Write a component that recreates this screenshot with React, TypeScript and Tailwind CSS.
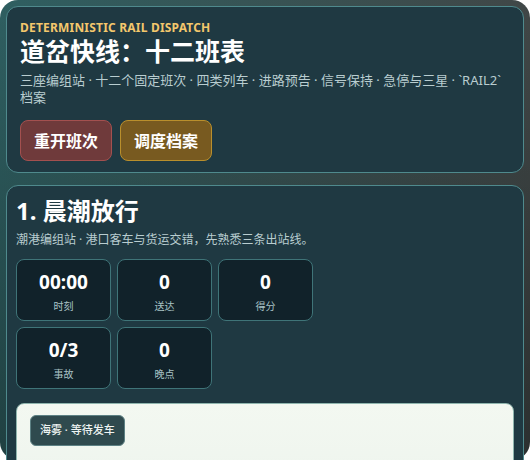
import React from "react";

const stats1 = [
  { v: "00:00", l: "时刻" },
  { v: "0", l: "送达" },
  { v: "0", l: "得分" },
];
const stats2 = [
  { v: "0/3", l: "事故" },
  { v: "0", l: "晚点" },
];

function Stat({ v, l }: { v: string; l: string }) {
  return (
    <div className="h-[62px] rounded-[8px] border border-[#3f7478] bg-[#11222a] pt-[3px] flex flex-col items-center justify-center">
      <div className="text-[19px] font-bold leading-[22px] text-white">{v}</div>
      <div className="mt-[7px] text-[10px] leading-[12px] text-[#a9c3c6]">{l}</div>
    </div>
  );
}

export default function App() {
  return (
    <div
      className="h-[460px] w-[530px] rounded-[18px] p-[6px] flex flex-col gap-[12px] bg-[linear-gradient(to_bottom,rgba(0,0,0,0)_0%,rgba(0,0,0,0.33)_100%),linear-gradient(to_right,#2f5f61,#404747)]"
      style={{ fontFamily: '"Noto Sans", "Noto Sans CJK SC", sans-serif' }}
    >
      <div className="shrink-0 rounded-[12px] border border-[#4f8a8d] bg-[#1f3942] px-[13px] pt-[14px] pb-[11px]">
        <div className="text-[12px] font-bold leading-[14px] tracking-[0.2px] text-[#f3c76c]">
          DETERMINISTIC RAIL DISPATCH
        </div>
        <div className="text-[25px] font-bold leading-[32px] text-white">道岔快线：十二班表</div>
        <div className="mt-[5px] text-[13px] leading-[17px] text-[#b9cdd0]">
          三座编组站 · 十二个固定班次 · 四类列车 · 进路预告 · 信号保持 · 急停与三星 · `RAIL2` 档案
        </div>
        <div className="mt-[14px] flex gap-[8px]">
          <button className="h-[41px] rounded-[8px] border border-[#a3504f] bg-[#6f3a3b] px-[13px] text-[16px] font-semibold text-white">
            重开班次
          </button>
          <button className="h-[41px] rounded-[8px] border border-[#b98f2c] bg-[#785a20] px-[13px] text-[16px] font-semibold text-white">
            调度档案
          </button>
        </div>
      </div>

      <div className="shrink-0 rounded-[12px] border border-[#4f8a8d] bg-[#1f3942] px-[9px] pt-[10px] pb-[9px]">
        <div className="text-[24px] font-bold leading-[30px] text-white">1. 晨潮放行</div>
        <div className="mt-[6px] text-[12px] leading-[16px] text-[#b9cdd0]">
          潮港编组站 · 港口客车与货运交错，先熟悉三条出站线。
        </div>
        <div className="mt-[11px] grid grid-cols-[repeat(3,95px)] gap-[6px]">
          {stats1.map((s) => (
            <Stat key={s.l} v={s.v} l={s.l} />
          ))}
          {stats2.map((s) => (
            <Stat key={s.l} v={s.v} l={s.l} />
          ))}
        </div>
        <div className="mt-[14px] h-[120px] rounded-[8px] border border-[#8fb5ae] bg-[linear-gradient(to_bottom,#f3f8f1,#ecf3ec)] px-[13px] pt-[11px]">
          <div className="inline-flex h-[31px] items-center rounded-[6px] border border-[#5d8184] bg-[#2f4a4e] px-[9px] text-[11px] font-medium text-[#eef4f2]">
            海雾 · 等待发车
          </div>
        </div>
      </div>
    </div>
  );
}
